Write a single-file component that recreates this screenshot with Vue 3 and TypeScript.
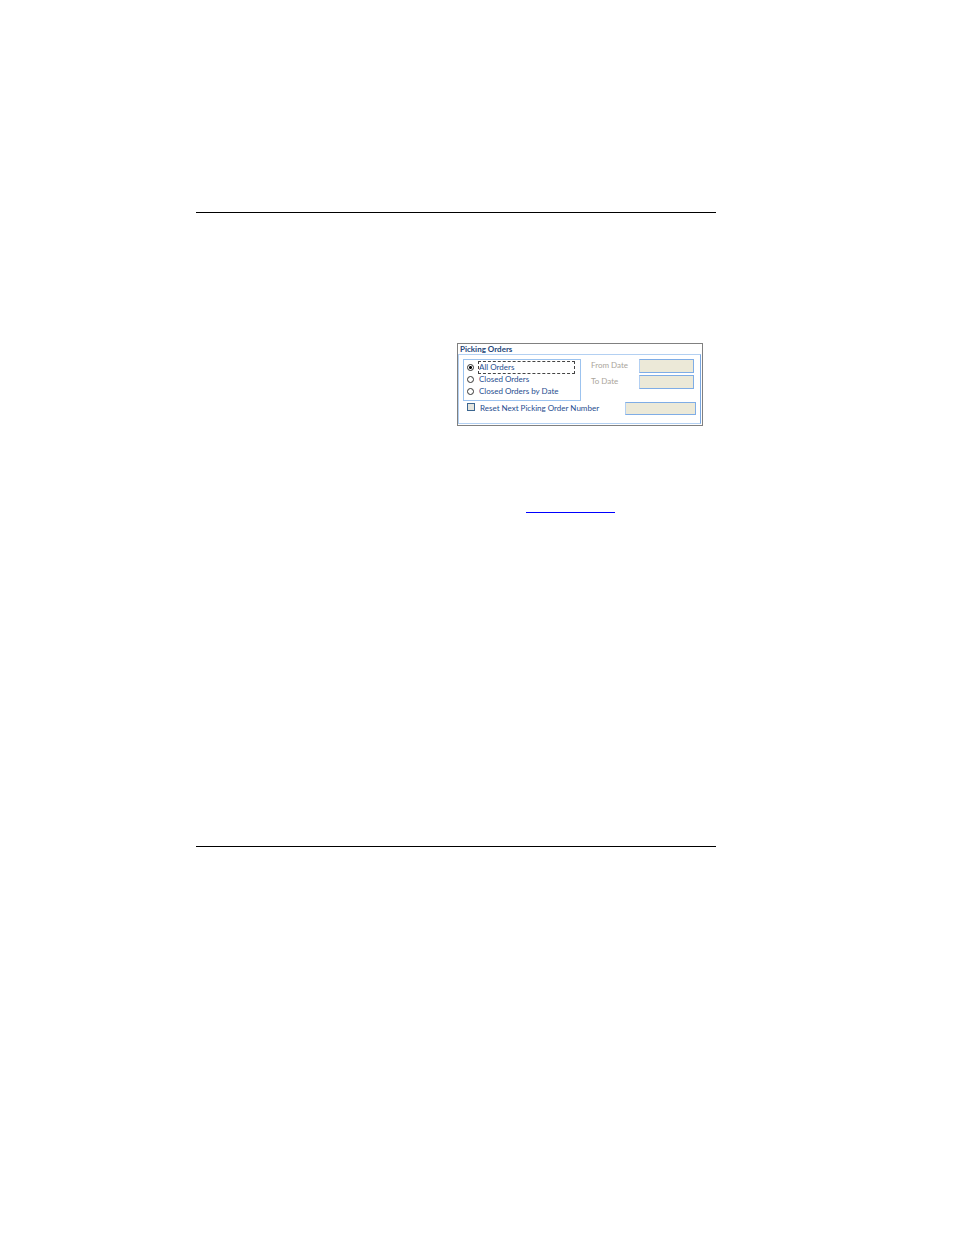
<script setup lang="ts">
import { ref } from 'vue'

interface OrderOption {
  value: string
  label: string
}

const options: OrderOption[] = [
  { value: 'all', label: 'All Orders' },
  { value: 'closed', label: 'Closed Orders' },
  { value: 'closed-by-date', label: 'Closed Orders by Date' },
]

const selected = ref('all')
const resetNumber = ref(false)
const fromDate = ref('')
const toDate = ref('')
const nextNumber = ref('')
</script>

<template>
  <main class="page">
    <div class="content">
      <hr class="rule" />
      <section class="body">
        <form class="panel" @submit.prevent>
          <h2 class="title">Picking Orders</h2>
          <div class="frame">
            <div class="filters">
              <div class="options" role="radiogroup" aria-label="Picking Orders">
                <label v-for="o in options" :key="o.value" class="option">
                  <input v-model="selected" type="radio" name="orders" :value="o.value" />
                  <span class="caption" :class="{ focused: selected === o.value }">{{ o.label }}</span>
                </label>
              </div>
              <div class="dates">
                <label class="date" for="from-date">From Date</label>
                <input id="from-date" v-model="fromDate" class="field" type="text" disabled />
                <label class="date" for="to-date">To Date</label>
                <input id="to-date" v-model="toDate" class="field" type="text" disabled />
              </div>
            </div>
            <div class="reset">
              <label class="check">
                <input v-model="resetNumber" type="checkbox" />
                <span>Reset Next Picking Order Number</span>
              </label>
              <input v-model="nextNumber" class="field number" type="text" aria-label="Next Picking Order Number" disabled />
            </div>
          </div>
        </form>
        <a class="link" href="#orders" aria-label="Orders"></a>
      </section>
      <hr class="rule" />
    </div>
  </main>
</template>

<style>
body {
  margin: 0;
  background: #fff;
}
</style>

<style scoped>
.page {
  display: grid;
  grid-template-columns: 196fr 520fr 238fr;
  box-sizing: border-box;
  min-height: 100vh;
  padding-top: 212px;
  font-family: Lato, "Open Sans", sans-serif;
  font-size: 8px;
  line-height: 12px;
  color: #1f4e8f;
}

.content {
  grid-column: 2;
}

.rule {
  height: 1px;
  margin: 0;
  border: 0;
  background: #000;
}

.body {
  display: flex;
  flex-direction: column;
  align-items: flex-end;
  min-height: 503px;
  padding-top: 130px;
}

.panel {
  box-sizing: border-box;
  width: 246px;
  margin-right: 13px;
  border: 1px solid #808080;
  padding: 0 1px 1px 0;
}

.title {
  margin: 0;
  padding-left: 2px;
  font-size: 8px;
  font-weight: 700;
  line-height: 10px;
  color: #25487a;
}

.frame {
  border: 1px solid #b3d0f2;
  border-right-color: #7aa7e0;
  padding: 4px 4px 8px;
}

.filters {
  display: flex;
  justify-content: space-between;
}

.options {
  box-sizing: border-box;
  width: 118px;
  height: 42px;
  padding: 1px 5px 0 3px;
  border: 1px solid #9cc3ef;
}

.option {
  display: flex;
  align-items: center;
  gap: 4px;
  height: 12px;
}

.caption {
  flex: 1;
  box-sizing: border-box;
  height: 13px;
  border: 1px dashed transparent;
  line-height: 11px;
}

.focused {
  border-color: #444;
}

.option input {
  appearance: none;
  box-sizing: border-box;
  width: 7px;
  height: 7px;
  margin: 0;
  border: 1px solid #333;
  border-radius: 50%;
  background: #fff;
}

.option input:checked {
  background: radial-gradient(circle, #000 1px, #fff 2px);
}

.dates {
  display: grid;
  grid-template-columns: 48px 55px;
  grid-auto-rows: 14px;
  row-gap: 2px;
  padding-right: 2px;
}

.date {
  color: #aaa59b;
}

.field {
  box-sizing: border-box;
  width: 100%;
  height: 14px;
  margin: 0;
  padding: 0 2px;
  border: 1px solid #7fade6;
  border-left-color: #b3d0f2;
  border-radius: 0;
  background: #ece9d8;
  font: inherit;
}

.reset {
  display: flex;
  justify-content: space-between;
  padding: 1px 0 0 4px;
}

.check {
  display: flex;
  gap: 5px;
}

.check input {
  appearance: none;
  box-sizing: border-box;
  width: 8px;
  height: 8px;
  margin: 1px 0 0;
  border: 1px solid #3c6690;
  background: #e4e5de;
}

.check input:checked {
  background: #1f4e8f;
}

.number {
  width: 71px;
  height: 13px;
}

.link {
  width: 89px;
  height: 12px;
  margin: 74px 101px 0 0;
  border-bottom: 1px solid #00f;
}
</style>
